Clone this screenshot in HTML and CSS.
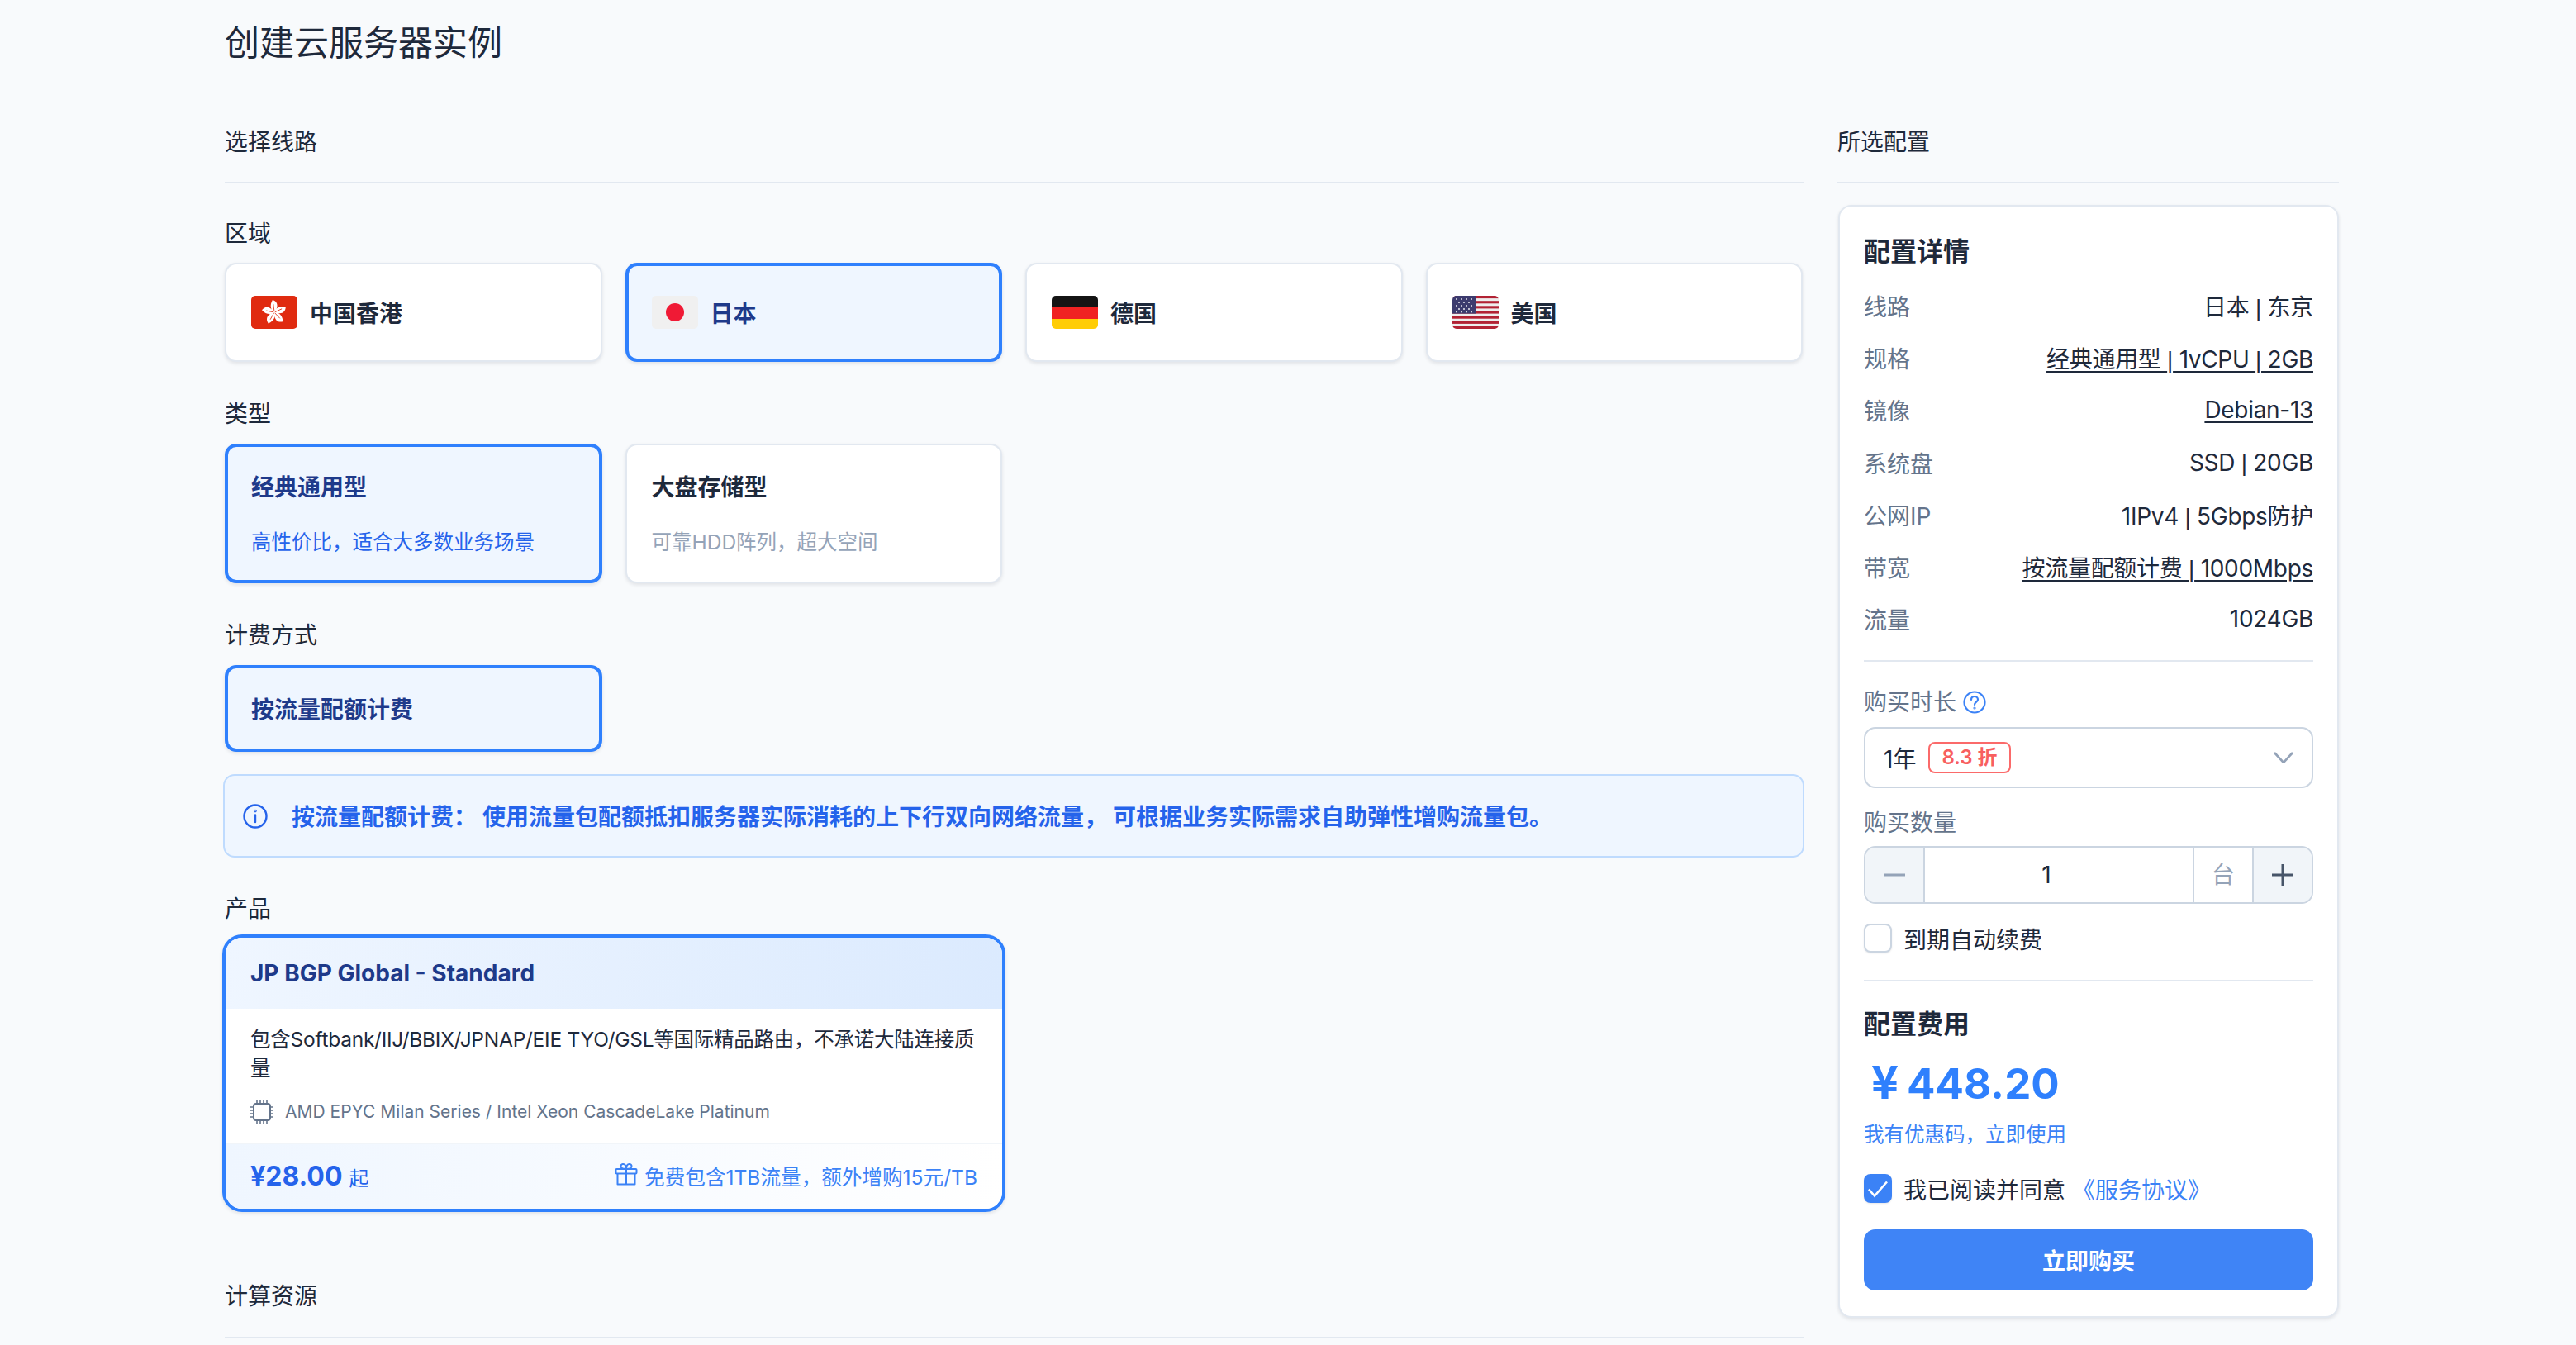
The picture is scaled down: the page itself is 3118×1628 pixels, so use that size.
FILE: index.html
```html
<!DOCTYPE html>
<html lang="zh-CN">
<head>
    <meta charset="UTF-8">
    <meta name="viewport" content="width=device-width, initial-scale=1.0">
    <title>创建云服务器实例</title>
    <link rel="stylesheet" href="styles.css">
</head>
<body>
    <svg class="defs" width="0" height="0">
        <defs>
            <g id="petal">
                <path fill="#fff" d="M28 20C24 17 22.500 11 27 4.800C30.200 6 32.800 9 32 13C31.500 16 29.500 18.500 28 20Z"/>
                <path fill="none" stroke="#e02b10" stroke-width="0.8" d="M28 19L27.500 10"/>
            </g>
        </defs>
    </svg>

    <div class="page">
        <h1>创建云服务器实例</h1>

        <div class="layout">
            <main class="main-col">
                <h2 class="section-title">选择线路</h2>

                <div class="field-label label-region">区域</div>
                <div class="option-grid">
                    <div class="option-card region-card">
                        <svg class="flag" viewBox="0 0 56 40">
                            <rect width="56" height="40" rx="5" fill="#e02b10"/>
                            <use href="#petal" transform="rotate(-4 28 20)"/>
                            <use href="#petal" transform="rotate(68 28 20)"/>
                            <use href="#petal" transform="rotate(140 28 20)"/>
                            <use href="#petal" transform="rotate(212 28 20)"/>
                            <use href="#petal" transform="rotate(284 28 20)"/>
                        </svg>
                        <span>中国香港</span>
                    </div>
                    <div class="option-card region-card active">
                        <svg class="flag" viewBox="0 0 56 40">
                            <rect width="56" height="40" rx="5" fill="#f0f0f0"/>
                            <circle cx="28" cy="20" r="11" fill="#f01a35"/>
                        </svg>
                        <span>日本</span>
                    </div>
                    <div class="option-card region-card">
                        <svg class="flag" viewBox="0 0 56 40">
                            <clipPath id="clip-de"><rect width="56" height="40" rx="5"/></clipPath>
                            <g clip-path="url(#clip-de)">
                                <rect width="56" height="14" fill="#141414"/>
                                <rect y="14" width="56" height="14" fill="#f02222"/>
                                <rect y="28" width="56" height="12" fill="#ffcd05"/>
                            </g>
                        </svg>
                        <span>德国</span>
                    </div>
                    <div class="option-card region-card">
                        <svg class="flag" viewBox="0 0 56 40">
                            <clipPath id="clip-us"><rect width="56" height="40" rx="5"/></clipPath>
                            <g clip-path="url(#clip-us)">
                                <rect width="56" height="40" fill="#eeeeee"/>
                                <g fill="#b22234">
                                    <rect width="56" height="3.1"/>
                                    <rect y="6.2" width="56" height="3.1"/>
                                    <rect y="12.3" width="56" height="3.1"/>
                                    <rect y="18.5" width="56" height="3.1"/>
                                    <rect y="24.6" width="56" height="3.1"/>
                                    <rect y="30.8" width="56" height="3.1"/>
                                    <rect y="36.9" width="56" height="3.1"/>
                                </g>
                                <rect width="28" height="21.6" fill="#3c3b6e"/>
                                <g fill="#e8e8f0">
                                    <circle cx="5" cy="4" r="1"/><circle cx="11" cy="4" r="1"/><circle cx="17" cy="4" r="1"/><circle cx="23" cy="4" r="1"/>
                                    <circle cx="8" cy="8" r="1"/><circle cx="14" cy="8" r="1"/><circle cx="20" cy="8" r="1"/>
                                    <circle cx="5" cy="12" r="1"/><circle cx="11" cy="12" r="1"/><circle cx="17" cy="12" r="1"/><circle cx="23" cy="12" r="1"/>
                                    <circle cx="8" cy="16" r="1"/><circle cx="14" cy="16" r="1"/><circle cx="20" cy="16" r="1"/>
                                    <circle cx="5" cy="19.5" r="1"/><circle cx="11" cy="19.5" r="1"/><circle cx="17" cy="19.5" r="1"/><circle cx="23" cy="19.5" r="1"/>
                                </g>
                            </g>
                        </svg>
                        <span>美国</span>
                    </div>
                </div>

                <div class="field-label">类型</div>
                <div class="option-grid">
                    <div class="option-card type-card active">
                        <div class="type-name">经典通用型</div>
                        <div class="type-desc">高性价比，适合大多数业务场景</div>
                    </div>
                    <div class="option-card type-card">
                        <div class="type-name">大盘存储型</div>
                        <div class="type-desc">可靠HDD阵列，超大空间</div>
                    </div>
                </div>

                <div class="field-label">计费方式</div>
                <div class="option-grid">
                    <div class="option-card billing-card active">按流量配额计费</div>
                </div>

                <div class="notice">
                    <svg class="notice-icon" viewBox="0 0 30 30" fill="none" stroke="currentColor" stroke-width="2.4" stroke-linecap="round">
                        <circle cx="15" cy="15" r="13.5"/>
                        <path d="M15 13.5V22"/>
                        <circle cx="15" cy="8.6" r="0.6"/>
                    </svg>
                    <span>按流量配额计费： 使用流量包配额抵扣服务器实际消耗的上下行双向网络流量， 可根据业务实际需求自助弹性增购流量包。</span>
                </div>

                <div class="field-label label-product">产品</div>
                <div class="product-card">
                    <div class="product-head">JP BGP Global - Standard</div>
                    <div class="product-body">
                        <p class="product-desc">包含Softbank/IIJ/BBIX/JPNAP/EIE TYO/GSL等国际精品路由，不承诺大陆连接质量</p>
                        <div class="product-cpu">
                            <svg class="cpu-icon" viewBox="0 0 28 28" fill="none" stroke="currentColor">
                                <rect x="4" y="4" width="20" height="20" rx="3" stroke-width="2"/>
                                <path stroke-width="1.600" d="M8 0v4M12 0v4M16 0v4M20 0v4M8 24v4M12 24v4M16 24v4M20 24v4M0 8h4M0 12h4M0 16h4M0 20h4M24 8h4M24 12h4M24 16h4M24 20h4"/>
                            </svg>
                            <span>AMD EPYC Milan Series / Intel Xeon CascadeLake Platinum</span>
                        </div>
                    </div>
                    <div class="product-foot">
                        <div class="product-price">¥28.00<small>起</small></div>
                        <div class="product-gift">
                            <svg class="gift-icon" viewBox="0 0 28 28" fill="none" stroke="currentColor" stroke-width="2" stroke-linejoin="round">
                                <rect x="1.5" y="8" width="25" height="5.5" rx="1"/>
                                <path d="M3.5 13.500V26.500H24.500V13.500M14 8V26.500"/>
                                <path d="M14 8C11 8 7.500 7.500 7.500 4.500C7.500 1.500 11.500 1 13 3.500C13.700 4.700 14 6 14 8ZM14 8C17 8 20.500 7.500 20.500 4.500C20.500 1.500 16.500 1 15 3.500C14.300 4.700 14 6 14 8Z"/>
                            </svg>
                            <span>免费包含1TB流量，额外增购15元/TB</span>
                        </div>
                    </div>
                </div>

                <h2 class="section-title section-compute">计算资源</h2>
            </main>

            <aside class="side-col">
                <h2 class="section-title">所选配置</h2>

                <div class="summary-card">
                    <h3 class="summary-title">配置详情</h3>
                    <div class="summary-rows">
                        <div class="summary-row"><span class="row-key">线路</span><span class="row-value">日本 <i class="sep">|</i> 东京</span></div>
                        <div class="summary-row"><span class="row-key">规格</span><a class="row-value row-link">经典通用型 <i class="sep">|</i> 1vCPU <i class="sep">|</i> 2GB</a></div>
                        <div class="summary-row"><span class="row-key">镜像</span><a class="row-value row-link">Debian-13</a></div>
                        <div class="summary-row"><span class="row-key">系统盘</span><span class="row-value">SSD <i class="sep">|</i> 20GB</span></div>
                        <div class="summary-row"><span class="row-key">公网IP</span><span class="row-value">1IPv4 <i class="sep">|</i> 5Gbps防护</span></div>
                        <div class="summary-row"><span class="row-key">带宽</span><a class="row-value row-link">按流量配额计费 <i class="sep">|</i> 1000Mbps</a></div>
                        <div class="summary-row"><span class="row-key">流量</span><span class="row-value">1024GB</span></div>
                    </div>

                    <hr class="summary-line line-first">

                    <div class="side-label label-duration">
                        购买时长
                        <svg class="help-icon" viewBox="0 0 28 28" fill="none" stroke="currentColor" stroke-width="2.2" stroke-linecap="round">
                            <circle cx="14" cy="14" r="12.500"/>
                            <path d="M10 11C10 8.500 11.800 7 14 7C16.200 7 18 8.500 18 10.700C18 13.500 14 13.800 14 17"/>
                            <circle cx="14" cy="21" r="0.5"/>
                        </svg>
                    </div>
                    <div class="select-box">
                        <span>1年</span>
                        <span class="discount-tag">8.3 折</span>
                        <svg class="chevron" viewBox="0 0 24 14" fill="none" stroke="currentColor" stroke-width="2.6">
                            <path d="M1 1L12 13L23 1"/>
                        </svg>
                    </div>

                    <div class="side-label label-quantity">购买数量</div>
                    <div class="quantity">
                        <div class="qty-btn qty-minus"><svg viewBox="0 0 28 28" fill="none" stroke="currentColor" stroke-width="3"><path d="M1 14H27"/></svg></div>
                        <div class="qty-value">1</div>
                        <div class="qty-unit">台</div>
                        <div class="qty-btn qty-plus"><svg viewBox="0 0 28 28" fill="none" stroke="currentColor" stroke-width="3"><path d="M1 14H27M14 1V27"/></svg></div>
                    </div>

                    <div class="check-row renew-row">
                        <span class="checkbox"></span>
                        <span>到期自动续费</span>
                    </div>

                    <hr class="summary-line line-second">

                    <h3 class="summary-title fee-title">配置费用</h3>
                    <div class="total-price"><span class="yen">¥</span>448.20</div>
                    <a class="coupon-link">我有优惠码，立即使用</a>

                    <div class="check-row agree-row">
                        <span class="checkbox checked">
                            <svg viewBox="0 0 34 34" fill="none" stroke="#fff" stroke-width="2.600"><path d="M6 18L13 26L28 9"/></svg>
                        </span>
                        <span>我已阅读并同意</span>
                        <a class="agree-link">《服务协议》</a>
                    </div>

                    <button class="buy-btn">立即购买</button>
                </div>
            </aside>
        </div>
    </div>
</body>
</html>
```

FILE: styles.css
```css
* {
    box-sizing: border-box;
}
body {
    margin: 0;
    background-color: #f8fafc;
    color: #1e293b;
    font-family: Inter, "Noto Sans CJK SC", sans-serif;
    font-size: 28px;
}
.defs {
    position: absolute;
}
.page {
    padding: 22px 0 0 272px;
}
h1 {
    margin: 0 0 70px;
    font-size: 42px;
    font-weight: 400;
    line-height: 60px;
}
.layout {
    display: grid;
    grid-template-columns: 1912px 607px;
    gap: 40px;
}
.section-title {
    margin: 0;
    padding-bottom: 28px;
    border-bottom: 2px solid #e2e8f0;
    font-size: 28px;
    font-weight: 400;
    line-height: 40px;
}
.section-compute {
    margin-top: 82px;
    padding-bottom: 29px;
}
.field-label {
    margin: 43px 0 16px;
    line-height: 40px;
}
.label-region {
    margin: 41px 0 15px;
}
.label-product {
    margin: 42px 0 11px;
}

/* 选项卡片 */
.option-grid {
    display: grid;
    grid-template-columns: repeat(4, 1fr);
    gap: 28px;
    width: 1910px;
}
.option-card {
    background-color: #fff;
    border: 2px solid #e2e8f0;
    border-radius: 14px;
    box-shadow: 0 2px 4px rgba(15, 23, 42, 0.1);
}
.option-card.active {
    background-color: #eff6ff;
    border: 4px solid #2f80fd;
    color: #1e3a8a;
}
.region-card {
    display: flex;
    align-items: center;
    gap: 15px;
    height: 120px;
    padding: 0 30px 1px;
    font-weight: 600;
}
.region-card.active {
    padding: 0 28px 1px;
}
.flag {
    display: block;
    width: 56px;
    height: 40px;
}
.type-card {
    height: 169px;
    padding: 31px 30px 0;
}
.type-card.active {
    padding: 29px 28px 0;
}
.type-name {
    font-weight: 600;
    line-height: 40px;
}
.type-desc {
    margin-top: 26px;
    color: #94a3b8;
    font-size: 24.500px;
    line-height: 40px;
}
.active .type-desc {
    color: #2563eb;
}
.billing-card {
    display: flex;
    align-items: center;
    height: 105px;
    padding: 0 28px 1px;
    font-weight: 600;
}

/* 提示框 */
.notice {
    display: flex;
    align-items: center;
    gap: 29px;
    width: 1914px;
    height: 101px;
    margin: 27px 0 0 -2px;
    padding: 0 22px;
    background-color: #eff6ff;
    border: 2px solid #bfdbfe;
    border-radius: 14px;
    color: #2563eb;
    font-weight: 600;
}
.notice span {
    margin-bottom: 2px;
}
.notice-icon {
    width: 30px;
    height: 30px;
}

/* 产品卡片 */
.product-card {
    width: 948px;
    margin-left: -3px;
    overflow: hidden;
    background-color: #fff;
    border: 4px solid #2f80fd;
    border-radius: 24px;
    box-shadow: 0 2px 4px rgba(15, 23, 42, 0.1);
}
.product-head {
    height: 86px;
    padding: 0 30px;
    background: linear-gradient(100deg, #eff6ff, #dbeafe);
    color: #1e3a8a;
    font-weight: 700;
    line-height: 86px;
}
.product-body {
    height: 162px;
    padding: 20px 30px 0;
}
.product-desc {
    margin: 0;
    font-size: 24.500px;
    letter-spacing: -0.25px;
    line-height: 35px;
}
.product-cpu {
    display: flex;
    align-items: center;
    gap: 14px;
    margin-top: 20px;
    color: #64748b;
    font-size: 21px;
    line-height: 30px;
}
.cpu-icon {
    width: 28px;
    height: 28px;
}
.product-foot {
    display: flex;
    align-items: center;
    justify-content: space-between;
    height: 80px;
    padding: 0 30px 2px;
    background: linear-gradient(90deg, #eff6ff, #fff);
    border-top: 2px solid #f1f5f9;
}
.product-price {
    color: #2563eb;
    font-size: 32px;
    font-weight: 700;
}
.product-price small {
    margin-left: 8px;
    font-size: 24px;
    font-weight: 400;
}
.product-gift {
    display: flex;
    align-items: center;
    gap: 8px;
    color: #3b82f6;
    font-size: 24.600px;
}
.gift-icon {
    width: 28px;
    height: 28px;
    margin-bottom: 4px;
}

/* 右侧配置 */
.summary-card {
    margin: 26px 0 0 1px;
    padding: 33px 29px 31px;
    background-color: #fff;
    border: 2px solid #e2e8f0;
    border-radius: 16px;
    box-shadow: 0 2px 4px rgba(15, 23, 42, 0.1);
}
.summary-title {
    margin: 0;
    font-size: 32px;
    font-weight: 600;
    line-height: 44px;
}
.summary-rows {
    margin-top: 11px;
}
.summary-row {
    display: flex;
    align-items: center;
    justify-content: space-between;
    height: 63.300px;
}
.row-key {
    color: #64748b;
}
.row-value {
    letter-spacing: -0.3px;
}
.row-link {
    text-decoration: underline;
    text-underline-offset: 4px;
}
.sep {
    font-family: "Liberation Sans", sans-serif;
    font-style: normal;
}
.summary-line {
    margin: 18px 0 0;
    border: 0;
    border-top: 2px solid #e2e8f0;
}
.side-label {
    display: flex;
    align-items: center;
    gap: 8px;
    color: #64748b;
    line-height: 40px;
}
.label-duration {
    margin: 29px 0 10px;
}
.label-quantity {
    margin: 22px 0 8px;
}
.help-icon {
    width: 28px;
    height: 28px;
    color: #3b82f6;
}
.select-box {
    display: flex;
    align-items: center;
    gap: 15px;
    height: 74px;
    padding: 0 22px;
    border: 2px solid #cbd5e1;
    border-radius: 14px;
}
.discount-tag {
    height: 38px;
    padding: 0 14px;
    border: 2px solid #fb6a6a;
    border-radius: 8px;
    color: #f85f5f;
    font-size: 24px;
    font-weight: 600;
    line-height: 33px;
}
.chevron {
    width: 24px;
    height: 14px;
    margin-left: auto;
    color: #94a3b8;
}
.quantity {
    display: flex;
    height: 70px;
    overflow: hidden;
    border: 2px solid #cbd5e1;
    border-radius: 14px;
}
.qty-btn {
    display: flex;
    flex: 0 0 72px;
    align-items: center;
    justify-content: center;
    background-color: #f1f5f9;
}
.qty-btn svg {
    width: 28px;
    height: 28px;
}
.qty-minus {
    border-right: 2px solid #cbd5e1;
    color: #94a3b8;
}
.qty-plus {
    border-left: 2px solid #cbd5e1;
    color: #475569;
}
.qty-value {
    flex: 1;
    padding-right: 30px;
    line-height: 66px;
    text-align: center;
}
.qty-unit {
    flex: 0 0 72px;
    border-left: 2px solid #cbd5e1;
    color: #94a3b8;
    line-height: 66px;
    text-align: center;
}
.check-row {
    display: flex;
    align-items: center;
    gap: 14px;
    height: 35px;
}
.renew-row {
    margin-top: 24px;
}
.checkbox {
    flex: 0 0 34px;
    height: 35px;
    background-color: #fff;
    border: 2px solid #cbd5e1;
    border-radius: 8px;
    box-shadow: 0 1px 2px rgba(15, 23, 42, 0.1);
}
.checkbox.checked {
    background-color: #3b82f6;
    border: 0;
}
.checkbox svg {
    display: block;
    width: 34px;
    height: 35px;
}
.line-second {
    margin-top: 33px;
}
.fee-title {
    margin-top: 30px;
}
.total-price {
    margin-top: 12px;
    color: #2f80fd;
    font-size: 51px;
    font-weight: 700;
    line-height: 64px;
}
.yen {
    display: inline-block;
    width: 42px;
    margin-right: 10px;
    text-align: right;
    font-family: "Noto Sans CJK SC", sans-serif;
    font-size: 56px;
    font-weight: 700;
}
.coupon-link {
    display: block;
    margin-top: 11px;
    color: #3b82f6;
    font-size: 24.500px;
    line-height: 36px;
}
.agree-row {
    margin-top: 30px;
}
.agree-link {
    margin-left: -6px;
    color: #3b82f6;
}
.buy-btn {
    display: block;
    width: 100%;
    height: 74px;
    margin-top: 32px;
    background-color: #3f84f6;
    border: none;
    border-radius: 14px;
    color: #fff;
    font-family: inherit;
    font-size: 28px;
    font-weight: 600;
}
```
